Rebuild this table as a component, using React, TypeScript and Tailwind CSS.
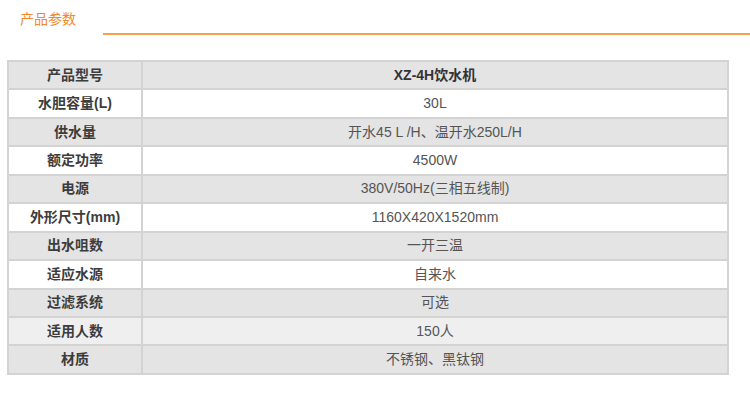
import React from "react";

const rows: { label: string; value: string; bg: string; bold?: boolean }[] = [
  { label: "产品型号", value: "XZ-4H饮水机", bg: "bg-[#e4e4e4]", bold: true },
  { label: "水胆容量(L)", value: "30L", bg: "bg-white" },
  { label: "供水量", value: "开水45 L /H、温开水250L/H", bg: "bg-[#e4e4e4]" },
  { label: "额定功率", value: "4500W", bg: "bg-white" },
  { label: "电源", value: "380V/50Hz(三相五线制)", bg: "bg-[#e4e4e4]" },
  { label: "外形尺寸(mm)", value: "1160X420X1520mm", bg: "bg-white" },
  { label: "出水咀数", value: "一开三温", bg: "bg-[#e4e4e4]" },
  { label: "适应水源", value: "自来水", bg: "bg-white" },
  { label: "过滤系统", value: "可选", bg: "bg-[#e4e4e4]" },
  { label: "适用人数", value: "150人", bg: "bg-[#efefef]" },
  { label: "材质", value: "不锈钢、黑钛钢", bg: "bg-[#e4e4e4]" },
];

export default function App() {
  return (
    <div
      className="w-[750px] h-[393px] bg-white overflow-hidden"
      style={{ fontFamily: '"Liberation Sans", "Noto Sans CJK SC", sans-serif' }}
    >
      <div className="flex h-[35px]">
        <span className="pl-[20px] pt-[10px] text-[14px] leading-[19px] text-[#f0892a]">产品参数</span>
        <div className="ml-[27px] flex-1 self-end h-[2px] bg-[#f6a04c]" />
      </div>
      <div className="ml-[7px] mt-[25px] w-[722px] border border-[#d3d3d3] flex flex-col">
        {rows.map((r) => (
          <div key={r.label} className={`flex h-[28.45px] ${r.bg}`}>
            <div className="w-[134px] border border-[#d3d3d3] flex items-center justify-center text-[14px] font-bold text-[#3c3c3c]">
              {r.label}
            </div>
            <div
              className={`flex-1 border border-[#d3d3d3] flex items-center justify-center text-[14px] ${
                r.bold ? "font-bold text-[#333]" : "text-[#555]"
              }`}
            >
              {r.value}
            </div>
          </div>
        ))}
      </div>
    </div>
  );
}
